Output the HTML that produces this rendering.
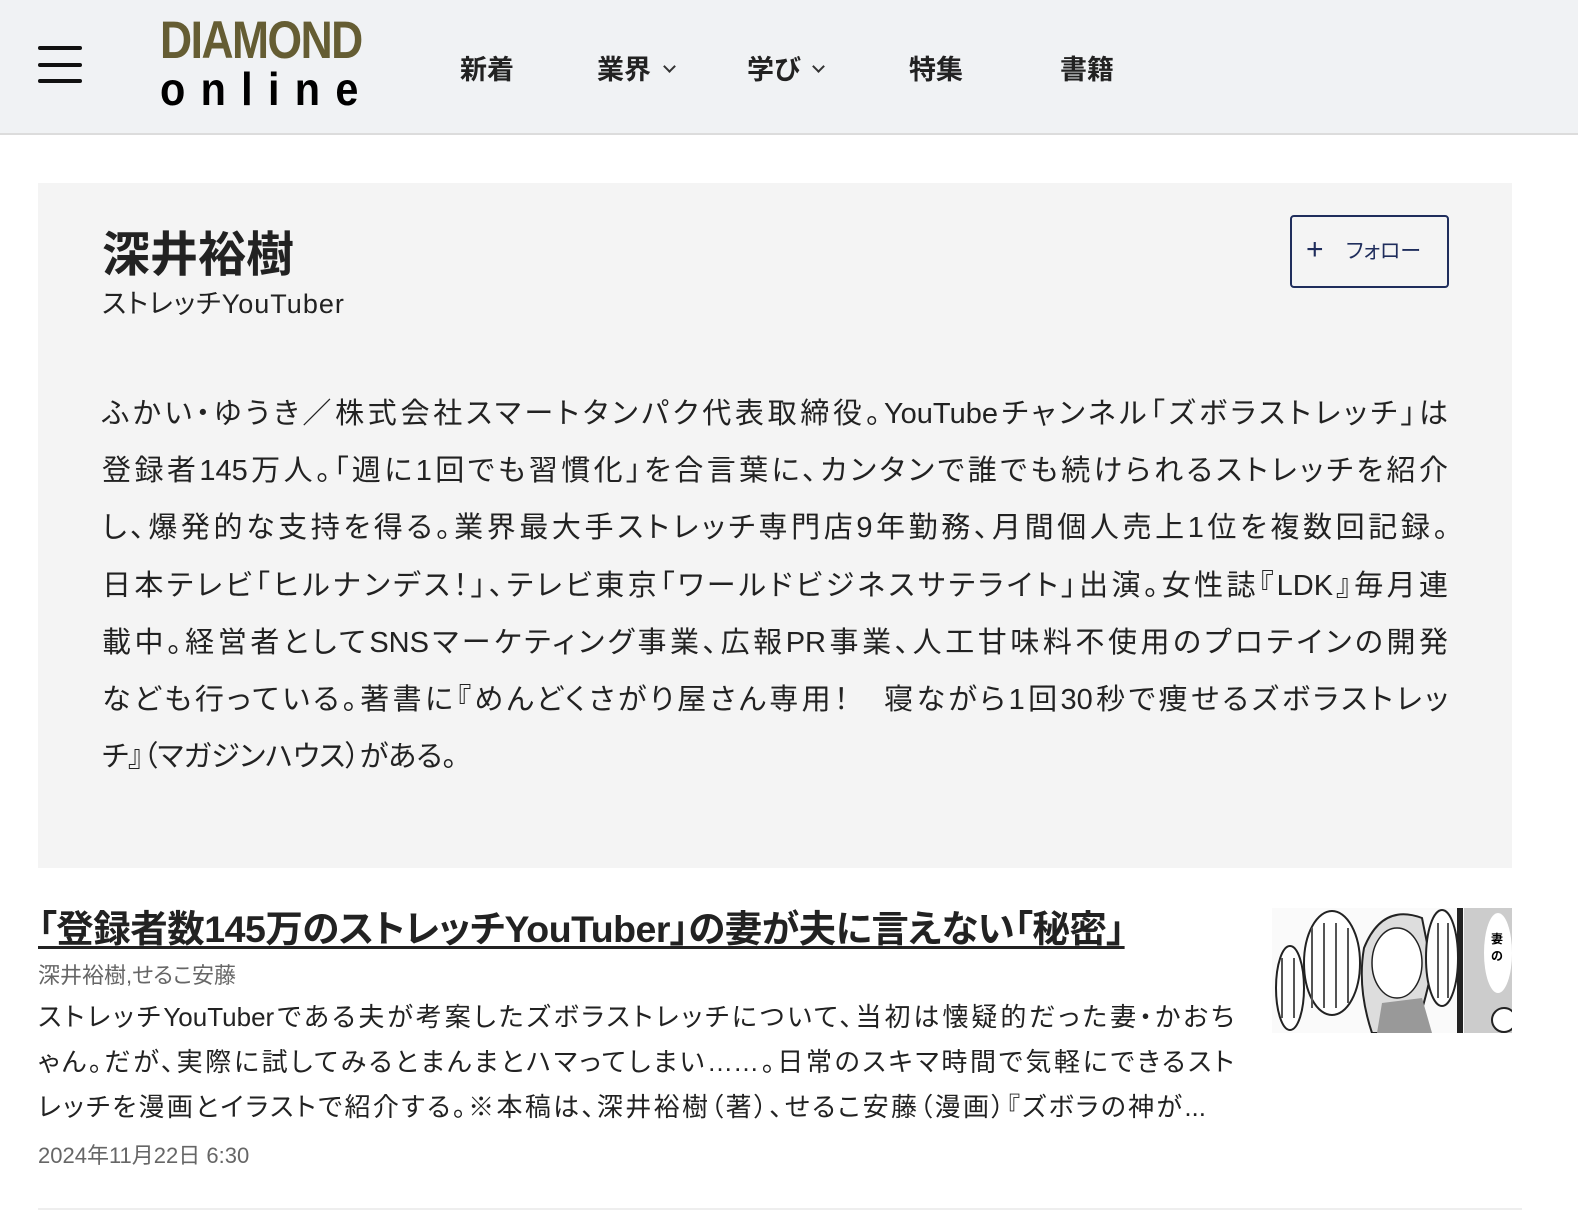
<!DOCTYPE html>
<html><head><meta charset="utf-8"><style>
body{margin:0;width:1578px;height:1222px;background:#fff;font-family:"Liberation Sans","Noto Sans CJK JP",sans-serif;color:#222;overflow:hidden;position:relative;font-feature-settings:"palt"}
.hdr{position:absolute;left:0;top:0;width:1578px;height:133px;background:#f0f2f4;border-bottom:2px solid #dcdcdc}
.ham{position:absolute;left:38px;width:44px;height:4px;background:#111;border-radius:2px}
.logo1{position:absolute;left:160px;top:14px;font:bold 60px/60px "Liberation Sans",sans-serif;color:#655d33;letter-spacing:-2px;transform:scale(0.74,0.88);transform-origin:left top;white-space:nowrap}
.logo2{position:absolute;left:160px;top:66px;font:bold 46px/46px "Liberation Sans",sans-serif;color:#000;letter-spacing:17px;transform:scaleX(0.9);transform-origin:left;white-space:nowrap}
.nav{position:absolute;top:48px;font-size:27px;font-weight:bold;color:#222}
.chev{display:inline-block;width:7px;height:7px;border-right:2px solid #333;border-bottom:2px solid #333;transform:rotate(45deg);margin-left:14px;vertical-align:8px}
.card{position:absolute;left:38px;top:183px;width:1474px;height:685px;background:#f4f4f4}
.name{position:absolute;left:102px;top:215px;font-size:48px;font-weight:bold;color:#222}
.role{position:absolute;left:102px;top:282px;font-size:27px;color:#222;letter-spacing:1px}
.fol{position:absolute;left:1290px;top:215px;width:155px;height:69px;border:2px solid #1f2d5c;border-radius:4px;box-sizing:content-box;color:#1f2d5c;font-size:21px;line-height:69px}
.bio{position:absolute;left:102px;top:386px;width:1346px;font-size:29px;line-height:57.2px;color:#222}
.bio div{text-align:justify;text-align-last:justify;white-space:nowrap;height:57.2px}
.bio div.l{text-align-last:left}
.t{position:absolute;left:38px;top:898px;font-size:37.5px;font-weight:bold;text-decoration:underline;text-underline-offset:4px;color:#222;letter-spacing:-0.5px;white-space:nowrap}
.au{position:absolute;left:38px;top:958px;font-size:22px;color:#666}
.ex{position:absolute;left:38px;top:995px;width:1196px;font-size:26px;line-height:45px;color:#222}
.ex div{white-space:nowrap;text-align:justify;text-align-last:justify;height:45px}
.dt{position:absolute;left:38px;top:1138px;font-size:22px;color:#666}
.thumb{position:absolute;left:1272px;top:908px;width:240px;height:125px;background:#f7f7f7;overflow:hidden}
.line{position:absolute;left:38px;top:1208px;width:1484px;height:2px;background:#eee}
</style></head><body>
<div class="hdr">
<div class="ham" style="top:46px"></div><div class="ham" style="top:63px"></div><div class="ham" style="top:79px"></div>
<div class="logo1">DIAMOND</div>
<div class="logo2">online</div>
<div class="nav" style="left:460px">新着</div>
<div class="nav" style="left:597px">業界<span class="chev"></span></div>
<div class="nav" style="left:747px">学び<span class="chev"></span></div>
<div class="nav" style="left:909px">特集</div>
<div class="nav" style="left:1060px">書籍</div>
</div>
<div class="card"></div>
<div class="name">深井裕樹</div>
<div class="role">ストレッチYouTuber</div>
<div class="fol"><span style="font-size:30px;position:absolute;left:14px;top:-2px">+</span><span style="position:absolute;left:54px">フォロー</span></div>
<div class="bio">
<div>ふかい・ゆうき／株式会社スマートタンパク代表取締役。YouTubeチャンネル「ズボラストレッチ」は</div>
<div>登録者145万人。「週に1回でも習慣化」を合言葉に、カンタンで誰でも続けられるストレッチを紹介</div>
<div>し、爆発的な支持を得る。業界最大手ストレッチ専門店9年勤務、月間個人売上1位を複数回記録。</div>
<div>日本テレビ「ヒルナンデス！」、テレビ東京「ワールドビジネスサテライト」出演。女性誌『LDK』毎月連</div>
<div>載中。経営者としてSNSマーケティング事業、広報PR事業、人工甘味料不使用のプロテインの開発</div>
<div>なども行っている。著書に『めんどくさがり屋さん専用！　寝ながら1回30秒で痩せるズボラストレッ</div>
<div class="l">チ』（マガジンハウス）がある。</div>
</div>
<div class="t">「登録者数145万のストレッチYouTuber」の妻が夫に言えない「秘密」</div>
<div class="au">深井裕樹,せるこ安藤</div>
<div class="ex"><div>ストレッチYouTuberである夫が考案したズボラストレッチについて、当初は懐疑的だった妻・かおち</div><div>ゃん。だが、実際に試してみるとまんまとハマってしまい……。日常のスキマ時間で気軽にできるスト</div><div style="width:1168px">レッチを漫画とイラストで紹介する。※本稿は、深井裕樹（著）、せるこ安藤（漫画）『ズボラの神が...</div></div>
<div class="dt">2024年11月22日 6:30</div>
<div class="thumb">
<svg width="240" height="125" viewBox="0 0 240 125">
<rect width="240" height="125" fill="#fafafa"/>
<ellipse cx="18" cy="80" rx="14" ry="42" fill="#fff" stroke="#222" stroke-width="2"/>
<ellipse cx="60" cy="55" rx="28" ry="52" fill="#fff" stroke="#222" stroke-width="2"/>
<g stroke="#555" stroke-width="2"><line x1="40" y1="20" x2="40" y2="100"/><line x1="52" y1="15" x2="52" y2="100"/><line x1="64" y1="15" x2="64" y2="100"/><line x1="76" y1="20" x2="76" y2="95"/><line x1="10" y1="50" x2="10" y2="110"/><line x1="22" y1="50" x2="22" y2="110"/></g>
<path d="M92 40 Q110 -5 150 10 L160 60 Q150 110 140 125 L100 125 Q85 80 92 40Z" fill="#ddd" stroke="#222" stroke-width="2"/>
<ellipse cx="125" cy="55" rx="25" ry="35" fill="#fff" stroke="#222" stroke-width="1.5"/>
<path d="M105 125 L110 95 L150 90 L160 125Z" fill="#999"/>
<ellipse cx="170" cy="50" rx="16" ry="48" fill="#fff" stroke="#222" stroke-width="2"/>
<g stroke="#555" stroke-width="2"><line x1="166" y1="15" x2="166" y2="90"/><line x1="176" y1="15" x2="176" y2="90"/></g>
<rect x="185" y="0" width="6" height="125" fill="#222"/>
<rect x="192" y="0" width="48" height="125" fill="#ccc"/>
<ellipse cx="226" cy="45" rx="14" ry="40" fill="#fff"/>
<text x="219" y="35" font-size="12" font-weight="bold" font-family="Noto Sans CJK JP">妻</text>
<text x="219" y="52" font-size="12" font-weight="bold" font-family="Noto Sans CJK JP">の</text>
<circle cx="232" cy="112" r="12" fill="#fff" stroke="#222" stroke-width="2"/>
</svg>
</div>
<div class="line"></div>
</body></html>
